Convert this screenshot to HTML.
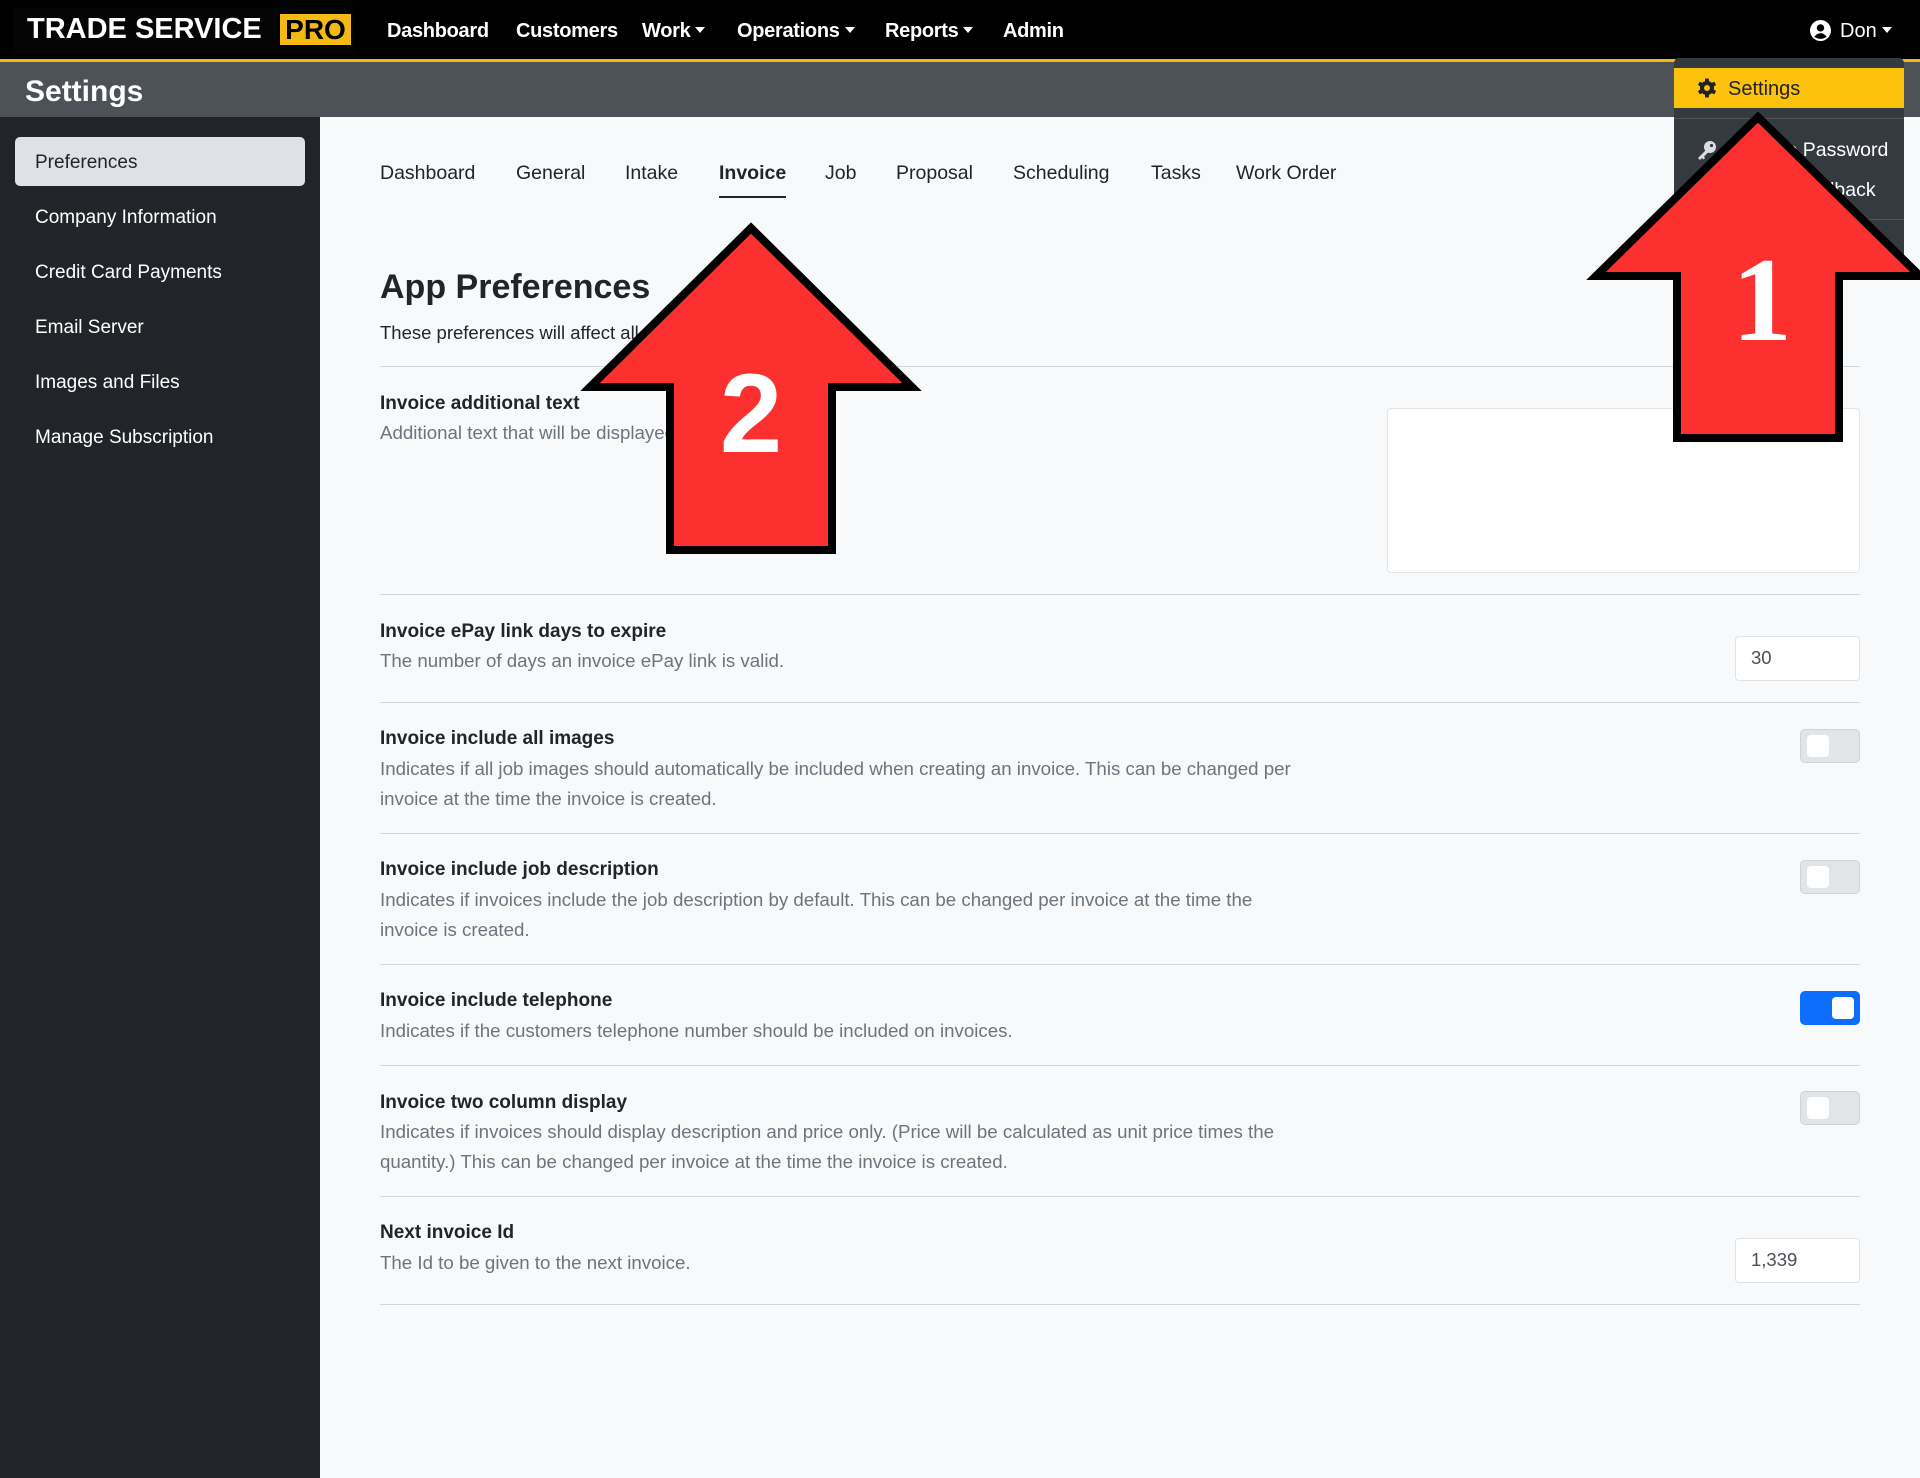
<!DOCTYPE html>
<html><head><meta charset="utf-8"><style>
*{box-sizing:border-box;margin:0;padding:0}
body{width:1920px;height:1478px;background:#f8f9fa;font-family:"Liberation Sans",sans-serif;position:relative;overflow:hidden;color:#212529}
.a{position:absolute;white-space:nowrap}
.nav{left:0;top:0;width:1920px;height:59px;background:#000}
.yl{left:0;top:59px;width:1920px;height:3px;background:#f5b914}
.bar{left:0;top:62px;width:1920px;height:55px;background:#4c5258}
.side{left:0;top:117px;width:320px;height:1361px;background:#212529}
.ni{color:#fff;font-size:20px;top:20px;font-weight:bold;letter-spacing:-0.3px}
.car{display:inline-block;width:0;height:0;border-left:5px solid transparent;border-right:5px solid transparent;border-top:6px solid #fff;margin-left:5px;vertical-align:4px}
.si{color:#fff;font-size:19px;left:35px}
.tab{font-size:19.5px;top:162px;color:#212529}
.lab{font-size:19px;left:380px;font-weight:bold;color:#212529}
.desc{font-size:18.7px;left:380px;color:#6c757d;line-height:30px;white-space:normal;width:965px}
.hr{left:380px;width:1480px;height:1px;background:#d3d6d9}
.tg{left:1800px;width:60px;height:34px;border-radius:5px;background:#e2e5e8;border:1px solid #cfd3d7}
.kn{position:absolute;left:6px;top:5px;width:22px;height:22px;border-radius:4px;background:#fff}
.inp{background:#fff;border:1px solid #dee2e6;border-radius:4px;font-size:18.5px;color:#495057;padding:10px 15px}
</style></head><body>
<div class="a nav"></div>
<div class="a yl"></div>
<div class="a bar"></div>
<div class="a side"></div>
<div class="a" style="left:14px;top:8px;width:340px;height:46px;background:#050505"></div>
<div class="a" style="left:27px;top:13px;color:#fff;font-size:29px;font-weight:bold;letter-spacing:0;transform:scaleX(1.0);transform-origin:left">TRADE SERVICE</div>
<div class="a" style="left:278px;top:12px;width:75px;height:35px;background:#f5b914;border:2px solid #000;color:#000;font-size:28px;font-weight:bold;text-align:center;line-height:31px">PRO</div>
<div class="a ni" style="left:387px">Dashboard</div>
<div class="a ni" style="left:516px">Customers</div>
<div class="a ni" style="left:642px">Work<span class="car"></span></div>
<div class="a ni" style="left:737px">Operations<span class="car"></span></div>
<div class="a ni" style="left:885px">Reports<span class="car"></span></div>
<div class="a ni" style="left:1003px">Admin</div>
<svg class="a" style="left:1810px;top:20px" width="21" height="21" viewBox="0 0 20 20"><circle cx="10" cy="10" r="10" fill="#fff"/><circle cx="10" cy="7.5" r="3.5" fill="#000"/><path d="M4 16 Q10 9 16 16 Q10 20 4 16Z" fill="#000"/></svg>
<div class="a" style="left:1840px;top:20px;color:#fff;font-size:20px">Don<span class="car"></span></div>
<div class="a" style="left:25px;top:75px;color:#fff;font-size:30px;font-weight:bold">Settings</div>
<div class="a" style="left:15px;top:137px;width:290px;height:49px;background:#dee2e6;border-radius:5px"></div>
<div class="a si" style="top:152px;color:#212529">Preferences</div>
<div class="a si" style="top:207px">Company Information</div>
<div class="a si" style="top:262px">Credit Card Payments</div>
<div class="a si" style="top:317px">Email Server</div>
<div class="a si" style="top:372px">Images and Files</div>
<div class="a si" style="top:427px">Manage Subscription</div>
<div class="a tab" style="left:380px">Dashboard</div>
<div class="a tab" style="left:516px">General</div>
<div class="a tab" style="left:625px">Intake</div>
<div class="a tab" style="left:719px;font-weight:bold">Invoice</div>
<div class="a" style="left:719px;top:196px;width:67px;height:2px;background:#212529"></div>
<div class="a tab" style="left:825px">Job</div>
<div class="a tab" style="left:896px">Proposal</div>
<div class="a tab" style="left:1013px">Scheduling</div>
<div class="a tab" style="left:1151px">Tasks</div>
<div class="a tab" style="left:1236px">Work Order</div>
<div class="a" style="left:380px;top:268px;font-size:34px;font-weight:bold">App Preferences</div>
<div class="a" style="left:380px;top:322px;font-size:18.5px">These preferences will affect all users of the application.</div>
<div class="a hr" style="top:366px"></div>
<div class="a lab" style="top:393px">Invoice additional text</div>
<div class="a desc" style="top:418px">Additional text that will be displayed on invoices.</div>
<div class="a" style="left:1387px;top:408px;width:473px;height:165px;background:#fff;border:1px solid #e3e6e9;border-radius:4px"></div>
<div class="a hr" style="top:594px"></div>
<div class="a lab" style="top:621px">Invoice ePay link days to expire</div>
<div class="a desc" style="top:646px">The number of days an invoice ePay link is valid.</div>
<div class="a inp" style="left:1735px;top:636px;width:125px;height:45px">30</div>
<div class="a hr" style="top:702px"></div>
<div class="a lab" style="top:728px">Invoice include all images</div>
<div class="a desc" style="top:754px">Indicates if all job images should automatically be included when creating an invoice. This can be changed per invoice at the time the invoice is created.</div>
<div class="a tg" style="top:729px"><div class="kn"></div></div>
<div class="a hr" style="top:833px"></div>
<div class="a lab" style="top:859px">Invoice include job description</div>
<div class="a desc" style="top:885px">Indicates if invoices include the job description by default. This can be changed per invoice at the time the<br>invoice is created.</div>
<div class="a tg" style="top:860px"><div class="kn"></div></div>
<div class="a hr" style="top:964px"></div>
<div class="a lab" style="top:990px">Invoice include telephone</div>
<div class="a desc" style="top:1016px">Indicates if the customers telephone number should be included on invoices.</div>
<div class="a tg" style="top:991px;background:#0d6efd;border-color:#0d6efd"><div class="kn" style="left:31px"></div></div>
<div class="a hr" style="top:1065px"></div>
<div class="a lab" style="top:1092px">Invoice two column display</div>
<div class="a desc" style="top:1117px">Indicates if invoices should display description and price only. (Price will be calculated as unit price times the quantity.) This can be changed per invoice at the time the invoice is created.</div>
<div class="a tg" style="top:1091px"><div class="kn"></div></div>
<div class="a hr" style="top:1196px"></div>
<div class="a lab" style="top:1222px">Next invoice Id</div>
<div class="a desc" style="top:1248px">The Id to be given to the next invoice.</div>
<div class="a inp" style="left:1735px;top:1238px;width:125px;height:45px">1,339</div>
<div class="a hr" style="top:1304px"></div>
<!-- dropdown -->
<div class="a" style="left:1674px;top:58px;width:230px;height:220px;background:#343a40;border-radius:5px"></div>
<div class="a" style="left:1674px;top:68px;width:230px;height:40px;background:#fcc20e"></div>
<svg class="a" style="left:1697px;top:78px" width="20" height="20" viewBox="0 0 20 20"><g fill="#222"><circle cx="10" cy="10" r="7"/><rect x="8" y="0.5" width="4" height="19" rx="1"/><rect x="8" y="0.5" width="4" height="19" rx="1" transform="rotate(60 10 10)"/><rect x="8" y="0.5" width="4" height="19" rx="1" transform="rotate(120 10 10)"/></g><circle cx="10" cy="10" r="3" fill="#fcc20e"/></svg>
<div class="a" style="left:1728px;top:78px;font-size:20px;color:#222">Settings</div>
<div class="a" style="left:1674px;top:118px;width:230px;height:1px;background:#555"></div>
<div class="a" style="left:1674px;top:219px;width:230px;height:1px;background:#555"></div>
<svg class="a" style="left:1696px;top:139px" width="22" height="22" viewBox="0 0 22 22"><circle cx="14" cy="8" r="6" fill="#ddd"/><circle cx="15.5" cy="6.5" r="1.6" fill="#343a40"/><path d="M10 11 L2 19 L4 21 L6 19 L7.5 20.5 L9 19 L8 17.5 L12.5 13Z" fill="#ddd"/></svg>
<div class="a" style="left:1729px;top:139px;font-size:19.5px;color:#fff">Change Password</div>
<div class="a" style="left:1739px;top:179px;font-size:19.5px;color:#fff">Send Feedback</div>
<!-- arrows -->
<svg class="a" style="left:0;top:0" width="1920" height="1478">
<polygon points="751,228 912,387 832,387 832,550 670,550 670,387 590,387" fill="#fd3030" stroke="#000" stroke-width="8" stroke-linejoin="miter"/>
<text x="751" y="452" font-family="Liberation Sans" font-weight="bold" font-size="112" fill="#fff" text-anchor="middle">2</text>
<polygon points="1758,117 1920,276 1839,276 1839,438 1677,438 1677,276 1596,276" fill="#fd3030" stroke="#000" stroke-width="8"/>
<text x="1762" y="340" font-family="Liberation Serif" font-weight="bold" font-size="120" fill="#fff" text-anchor="middle">1</text>
</svg>
</body></html>
